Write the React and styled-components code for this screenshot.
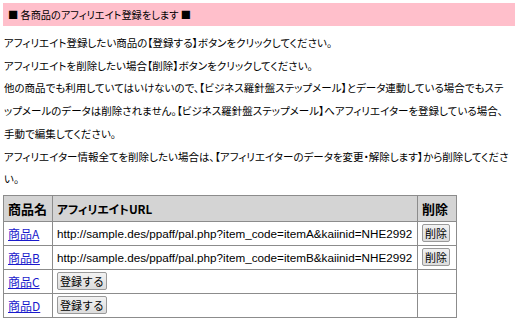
import React from 'react';
import styled, {createGlobalStyle} from 'styled-components';

const GlobalStyle = createGlobalStyle`
  body {
    margin: 0;
    background: #ffffff;
    font-family: "Noto Sans CJK JP", "Liberation Sans", sans-serif;
    color: #000000;
  }
`;

const Page = styled.div`
  padding: 3px;
  width: 512px;
  box-sizing: content-box;
`;

const TitleBar = styled.div`
  background-color: #ffbfcb;
  height: 23px;
  line-height: 23px;
  padding-left: 5px;
  font-size: 10.2px;
  font-feature-settings: "palt";
`;

const Notes = styled.div`
  margin-top: 6px;
  font-size: 10.5px;
  line-height: 22.7px;
  font-feature-settings: "palt";
  padding-left: 1px;
  white-space: nowrap;
`;

const Note = styled.p`
  margin: 0;
`;

const Table = styled.table`
  margin-top: 4px;
  border-collapse: collapse;
  width: 454px;
  border: 1px solid #a8a8a8;
`;

const HeadCell = styled.th`
  background-color: #d4d4d4;
  border: 1px solid #8c8c8c;
  height: 25px;
  padding: 0 4px;
  text-align: left;
  white-space: nowrap;
  font-size: ${props => props.size || '11.7px'};
  font-weight: bold;
  font-feature-settings: "palt";
  width: ${props => props.width || 'auto'};
`;

const Cell = styled.td`
  border: 1px solid #8c8c8c;
  height: 23px;
  padding: 0 4px;
  white-space: nowrap;
  font-size: 11.7px;
  font-family: ${props => (props.latin ? '"Liberation Sans", sans-serif' : 'inherit')};
`;

const ItemLink = styled.a`
  color: #1a1acc;
  font-size: 12px;
  text-decoration: underline;
  font-feature-settings: "palt";
`;

const Button = styled.button`
  font-family: "Noto Sans CJK JP", sans-serif;
  font-size: 11px;
  line-height: 14px;
  padding: 1px 2px;
  background: linear-gradient(#f2f2f2, #dcdcdc);
  border: 1px solid #9a9a9a;
  border-radius: 2px;
  color: #000;
`;

const items = [
  {name: '商品A', code: 'itemA', registered: true},
  {name: '商品B', code: 'itemB', registered: true},
  {name: '商品C', code: 'itemC', registered: false},
  {name: '商品D', code: 'itemD', registered: false}
];

const App = () => (
  <Page>
    <GlobalStyle />
    <TitleBar>■ 各商品のアフィリエイト登録をします ■</TitleBar>
    <Notes>
      <Note>アフィリエイト登録したい商品の【登録する】ボタンをクリックしてください。</Note>
      <Note>アフィリエイトを削除したい場合【削除】ボタンをクリックしてください。</Note>
      <Note>
        他の商品でも利用していてはいけないので、【ビジネス羅針盤ステップメール】とデータ連動している場合でもステ
        <br />
        ップメールのデータは削除されません。【ビジネス羅針盤ステップメール】へアフィリエイターを登録している場合、
        <br />
        手動で編集してください。
      </Note>
      <Note>
        アフィリエイター情報全てを削除したい場合は、【アフィリエイターのデータを変更・解除します】から削除してくださ
        <br />
        い。
      </Note>
    </Notes>
    <Table>
      <thead>
        <tr>
          <HeadCell width="40px" size="13px">商品名</HeadCell>
          <HeadCell>アフィリエイトURL</HeadCell>
          <HeadCell width="30px" size="13px">削除</HeadCell>
        </tr>
      </thead>
      <tbody>
        {items.map(item => (
          <tr key={item.code}>
            <Cell>
              <ItemLink href="#">{item.name}</ItemLink>
            </Cell>
            {item.registered ? (
              <>
                <Cell latin>
                  http://sample.des/ppaff/pal.php?item_code={item.code}&amp;kaiinid=NHE2992
                </Cell>
                <Cell>
                  <Button>削除</Button>
                </Cell>
              </>
            ) : (
              <>
                <Cell>
                  <Button>登録する</Button>
                </Cell>
                <Cell />
              </>
            )}
          </tr>
        ))}
      </tbody>
    </Table>
  </Page>
);

export default App;
